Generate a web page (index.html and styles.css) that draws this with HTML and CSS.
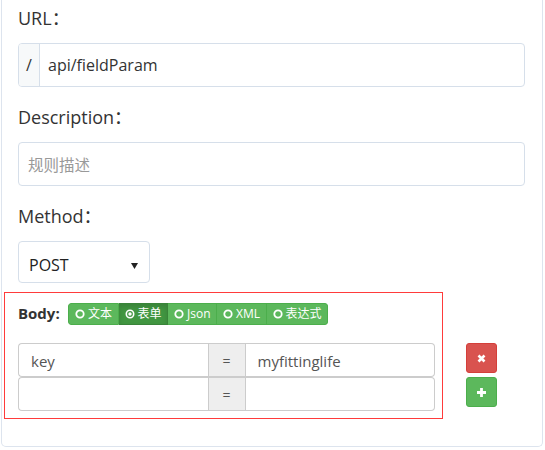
FILE: index.html
```html
<!DOCTYPE html>
<html>
<head>
<meta charset="utf-8">
<link rel="stylesheet" href="styles.css">
</head>
<body>
<div class="panel">
  <div class="field">
    <div class="label">URL：</div>
    <div class="input-group">
      <span class="addon">/</span>
      <span class="control">api/fieldParam</span>
    </div>
  </div>
  <div class="field">
    <div class="label">Description：</div>
    <div class="input-group">
      <span class="control placeholder">规则描述</span>
    </div>
  </div>
  <div class="field">
    <div class="label">Method：</div>
    <div class="select">
      <span>POST</span>
      <svg class="caret" width="7" height="6" viewBox="0 0 7 6"><path d="M0 0H7L3.5 6Z" fill="#222"/></svg>
    </div>
  </div>
  <div class="body-section">
    <div class="outline">
      <div class="body-head">
        <span class="body-label">Body:</span>
        <div class="btn-group">
          <span class="seg"><svg class="radio" viewBox="0 0 10 10"><circle cx="5" cy="5" r="3.7" fill="none" stroke="#fff" stroke-width="1.8"/></svg>文本</span>
          <span class="seg active"><svg class="radio" viewBox="0 0 10 10"><circle cx="5" cy="5" r="3.7" fill="none" stroke="#fff" stroke-width="1.6"/><circle cx="5" cy="5" r="1.7" fill="#fff"/></svg>表单</span>
          <span class="seg"><svg class="radio" viewBox="0 0 10 10"><circle cx="5" cy="5" r="3.7" fill="none" stroke="#fff" stroke-width="1.8"/></svg>Json</span>
          <span class="seg"><svg class="radio" viewBox="0 0 10 10"><circle cx="5" cy="5" r="3.7" fill="none" stroke="#fff" stroke-width="1.8"/></svg>XML</span>
          <span class="seg"><svg class="radio" viewBox="0 0 10 10"><circle cx="5" cy="5" r="3.7" fill="none" stroke="#fff" stroke-width="1.8"/></svg>表达式</span>
        </div>
      </div>
      <div class="kv-list">
        <div class="kv-row">
          <span class="kv-input">key</span>
          <span class="kv-eq">=</span>
          <span class="kv-input">myfittinglife</span>
        </div>
        <div class="kv-row">
          <span class="kv-input"></span>
          <span class="kv-eq">=</span>
          <span class="kv-input"></span>
        </div>
      </div>
    </div>
    <div class="actions">
      <span class="btn btn-danger"><svg width="9" height="9" viewBox="0 0 9 9"><path d="M1.5 1.5L7.5 7.5M7.5 1.5L1.5 7.5" stroke="#fff" stroke-width="2.6"/></svg></span>
      <span class="btn btn-success"><svg width="11" height="11" viewBox="0 0 11 11"><path d="M5.5 1V10M1 5.5H10" stroke="#fff" stroke-width="2.8"/></svg></span>
    </div>
  </div>
</div>
</body>
</html>
```

FILE: styles.css
```css
* { box-sizing: border-box; }
html, body { margin: 0; padding: 0; background: #fff; }
body {
  font-family: "Open Sans", "Noto Sans CJK SC", sans-serif;
  color: #333;
  width: 545px;
  height: 450px;
  overflow: hidden;
}
.panel {
  margin-left: 1px;
  width: 542px;
  height: 447px;
  border: 1px solid #dde4ee;
  border-top: 0;
  border-radius: 0 0 5px 5px;
  padding: 5px 17px 0 16px;
}
.field { margin-bottom: 17px; }
.label {
  font-size: 18px;
  line-height: 26px;
  margin-bottom: 12px;
  color: #333;
}
.input-group {
  display: flex;
  height: 44px;
  border: 1px solid #d6dfea;
  border-radius: 4px;
  overflow: hidden;
}
.addon {
  width: 21px;
  background: #f7f9fa;
  border-right: 1px solid #d6dfea;
  display: flex;
  align-items: center;
  justify-content: center;
  font-size: 16px;
  color: #333;
}
.control {
  flex: 1;
  display: flex;
  align-items: center;
  padding: 0 8px;
  font-size: 16px;
  color: #333;
}
.placeholder {
  color: #999;
  font-size: 15.5px;
  padding-left: 9px;
}
.select {
  width: 132px;
  height: 42px;
  border: 1px solid #d6dfea;
  border-radius: 4px;
  display: flex;
  align-items: center;
  justify-content: space-between;
  padding: 6px 11px 0 10px;
  font-size: 16px;
  color: #222;
}
.caret { display: block; margin-top: 1px; }
.body-section {
  display: flex;
  align-items: flex-start;
  margin-top: -8px;
  margin-left: -14px;
}
.outline {
  width: 439px;
  border: 1px solid #ff3b3b;
  padding: 10px 7px 7px 13px;
}
.body-head {
  display: flex;
  align-items: center;
  height: 22px;
  margin-bottom: 18px;
}
.body-label {
  font-size: 15px;
  font-weight: bold;
  color: #333;
  width: 50px;
  margin-top: -3px;
}
.btn-group {
  display: flex;
  height: 22px;
  border-radius: 3px;
  overflow: hidden;
}
.seg {
  display: flex;
  align-items: center;
  gap: 3px;
  padding: 0 5.5px 0 6px;
  background: #5cb85c;
  border: 1px solid #4cae4c;
  border-left-width: 0;
  color: #fff;
  font-size: 12px;
  line-height: 20px;
}
.seg:first-child { border-left-width: 1px; border-radius: 3px 0 0 3px; }
.seg:last-child { border-radius: 0 3px 3px 0; }
.seg.active {
  background: #419641;
  border-color: #398439;
  box-shadow: inset 0 3px 5px rgba(0,0,0,.125);
}
.radio { width: 10px; height: 10px; display: block; }
.kv-row {
  display: flex;
  height: 34px;
  font-size: 15px;
  color: #555;
}
.kv-input {
  flex: 1;
  display: flex;
  align-items: center;
  padding: 1px 12px 0;
  border: 1px solid #ccc;
  background: #fff;
}
.kv-row .kv-input:first-child { border-radius: 4px 0 0 4px; border-right: 0; }
.kv-row .kv-input:last-child { border-radius: 0 4px 4px 0; border-left: 0; }
.kv-eq {
  width: 38px;
  display: flex;
  align-items: center;
  justify-content: center;
  background: #eee;
  border: 1px solid #ccc;
  font-size: 14px;
  color: #555;
}
.actions {
  display: flex;
  flex-direction: column;
  gap: 4px;
  margin-left: 23px;
  margin-top: 51px;
}
.btn {
  width: 31px;
  height: 30px;
  border-radius: 3px;
  display: flex;
  align-items: center;
  justify-content: center;
}
.btn-danger { background: #d9534f; border: 1px solid #d43f3a; }
.btn-success { background: #5cb85c; border: 1px solid #4cae4c; }
```
